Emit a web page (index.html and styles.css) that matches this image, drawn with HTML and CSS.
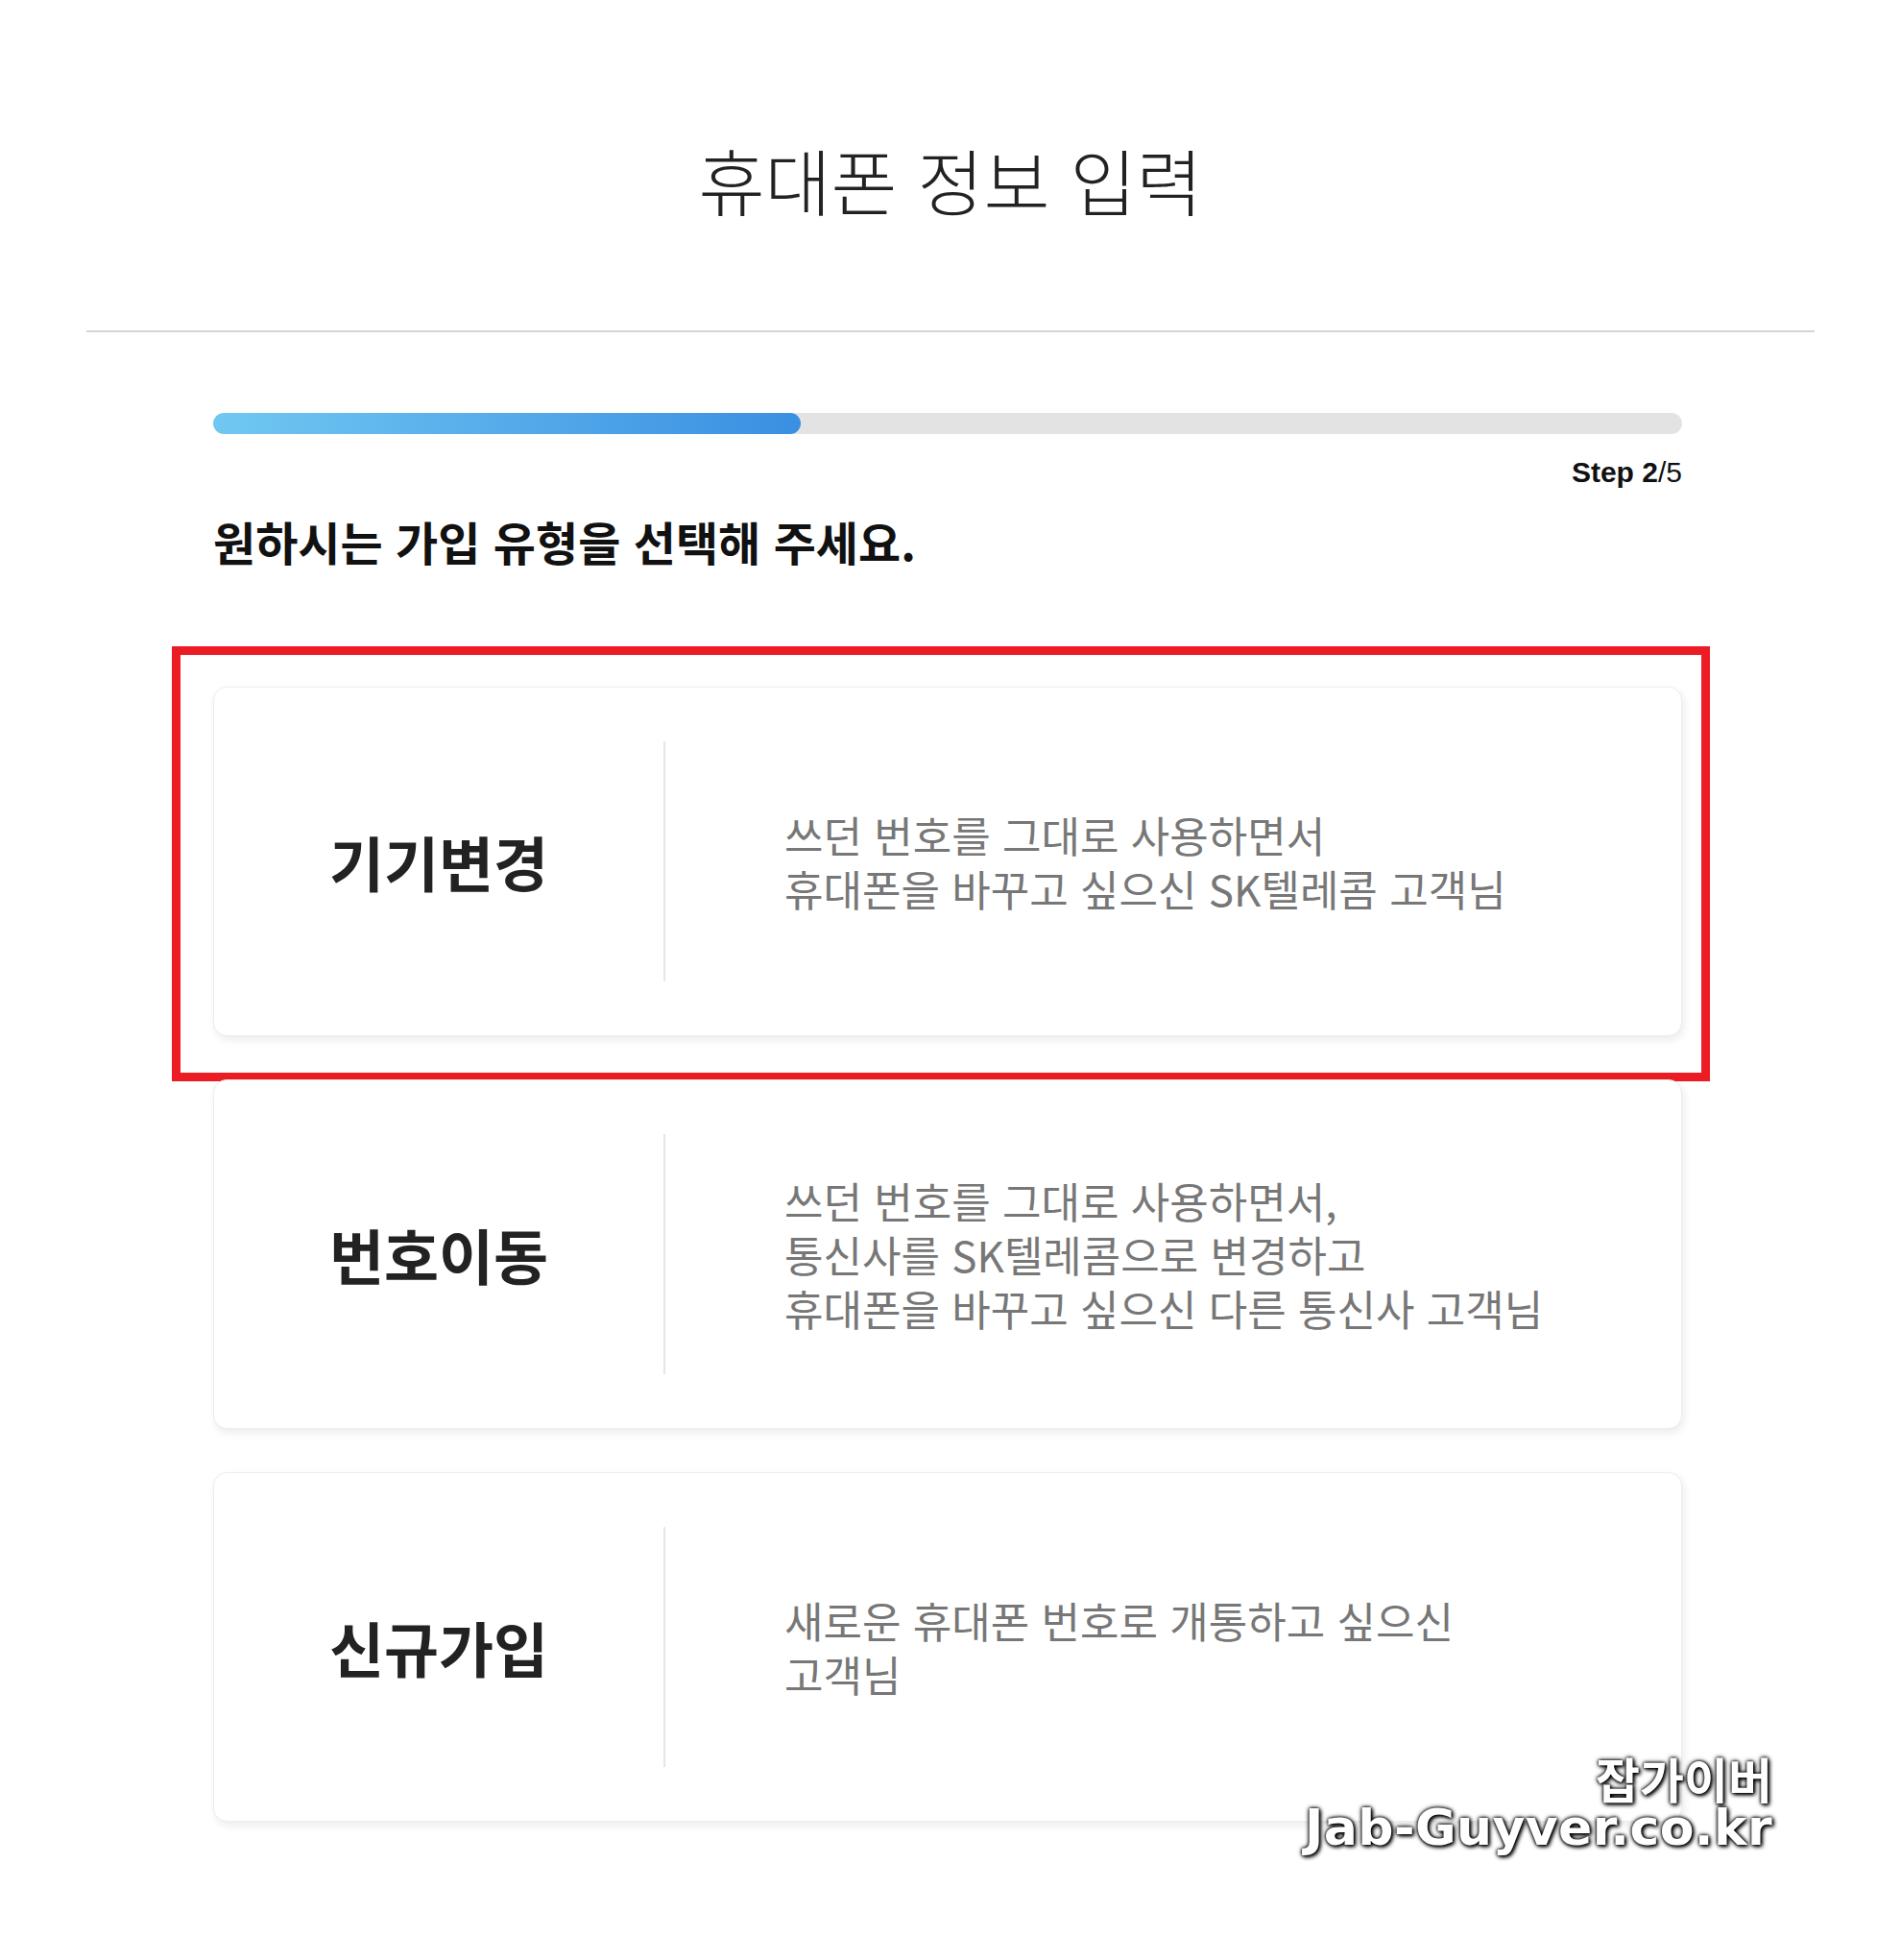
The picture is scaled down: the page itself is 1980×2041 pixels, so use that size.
FILE: index.html
```html
<!DOCTYPE html>
<html lang="ko">
<head>
<meta charset="utf-8">
<title>휴대폰 정보 입력</title>
<link rel="stylesheet" href="styles.css">
</head>
<body>
<div class="page">
  <header class="header">
    <h1 class="title">휴대폰 정보 입력</h1>
  </header>
  <main class="content">
    <div class="progress"><div class="progress-fill" style="width:40%"></div></div>
    <div class="step"><b>Step 2</b>/5</div>
    <h2 class="question">원하시는 가입 유형을 선택해 주세요.</h2>
    <ul class="options">
      <li class="option">
        <div class="option-name">기기변경</div>
        <div class="option-desc">쓰던 번호를 그대로 사용하면서<br>휴대폰을 바꾸고 싶으신 SK텔레콤 고객님</div>
        <span class="highlight-box"></span>
      </li>
      <li class="option">
        <div class="option-name">번호이동</div>
        <div class="option-desc">쓰던 번호를 그대로 사용하면서,<br>통신사를 SK텔레콤으로 변경하고<br>휴대폰을 바꾸고 싶으신 다른 통신사 고객님</div>
      </li>
      <li class="option">
        <div class="option-name">신규가입</div>
        <div class="option-desc">새로운 휴대폰 번호로 개통하고 싶으신<br>고객님</div>
      </li>
    </ul>
  </main>
  <div class="watermark">
    <div class="wm-ko">잡가이버</div>
    <div class="wm-en">Jab-Guyver.co.kr</div>
  </div>
</div>
</body>
</html>
```

FILE: styles.css
```css
html, body {
  margin: 0;
  padding: 0;
  background: #ffffff;
}

body {
  font-family: "Noto Sans CJK KR", "Noto Sans", sans-serif;
  color: #222;
}

.page {
  position: relative;
  min-height: 2041px;
}

.header {
  margin: 0 90px;
  padding: 140px 0 110px;
  border-bottom: 2px solid #d4d4d4;
  text-align: center;
}

.title {
  margin: 0;
  font-size: 75px;
  font-weight: 300;
  line-height: 94px;
  letter-spacing: 0;
  color: #222;
}

.content {
  width: 1530px;
  margin: 84px 0 0 222px;
}

.progress {
  height: 22px;
  border-radius: 11px;
  background: #e3e3e3;
  overflow: hidden;
}

.progress-fill {
  height: 100%;
  border-radius: 11px;
  background: linear-gradient(90deg, #70c8f2 0%, #3a8fe1 100%);
}

.step {
  margin-top: 23px;
  text-align: right;
  font-family: "Liberation Sans", Arial, sans-serif;
  font-size: 30px;
  line-height: 34px;
  color: #111;
}

.step b {
  font-weight: 700;
}

.question {
  margin: 26px 0 0;
  font-size: 48px;
  font-weight: 700;
  line-height: 57px;
  color: #111;
}

.options {
  list-style: none;
  margin: 123px 0 0;
  padding: 0;
  display: flex;
  flex-direction: column;
  gap: 45px;
}

.option {
  position: relative;
  display: flex;
  align-items: center;
  height: 364px;
  box-sizing: border-box;
  border: 1px solid #ececec;
  border-radius: 14px;
  background: #fff;
  box-shadow: 2px 4px 8px rgba(0, 0, 0, 0.08);
}

.option-name {
  flex: none;
  align-self: stretch;
  width: 468px;
  margin: 56px 0;
  border-right: 2px solid #e6e6e6;
  display: flex;
  align-items: center;
  justify-content: center;
  font-size: 62px;
  font-weight: 700;
  color: #222;
}

.option-desc {
  padding-left: 124px;
  font-size: 44px;
  line-height: 56px;
  color: #777;
}

.highlight-box {
  position: absolute;
  top: -43px;
  left: -44px;
  right: -30px;
  bottom: -48px;
  border: 9px solid #ec1c24;
  pointer-events: none;
}

.watermark {
  position: absolute;
  top: 1826px;
  right: 134px;
  text-align: right;
  color: #fff;
  text-shadow: 0 0 3px #000, 0 0 5px #000, 2px 2px 4px #000;
}

.wm-ko {
  font-family: "Noto Sans CJK KR", sans-serif;
  font-weight: 700;
  font-size: 50px;
  line-height: 50px;
}

.wm-en {
  font-family: "DejaVu Sans", sans-serif;
  font-weight: 700;
  font-size: 52px;
  line-height: 54px;
  letter-spacing: 0.4px;
}
```
